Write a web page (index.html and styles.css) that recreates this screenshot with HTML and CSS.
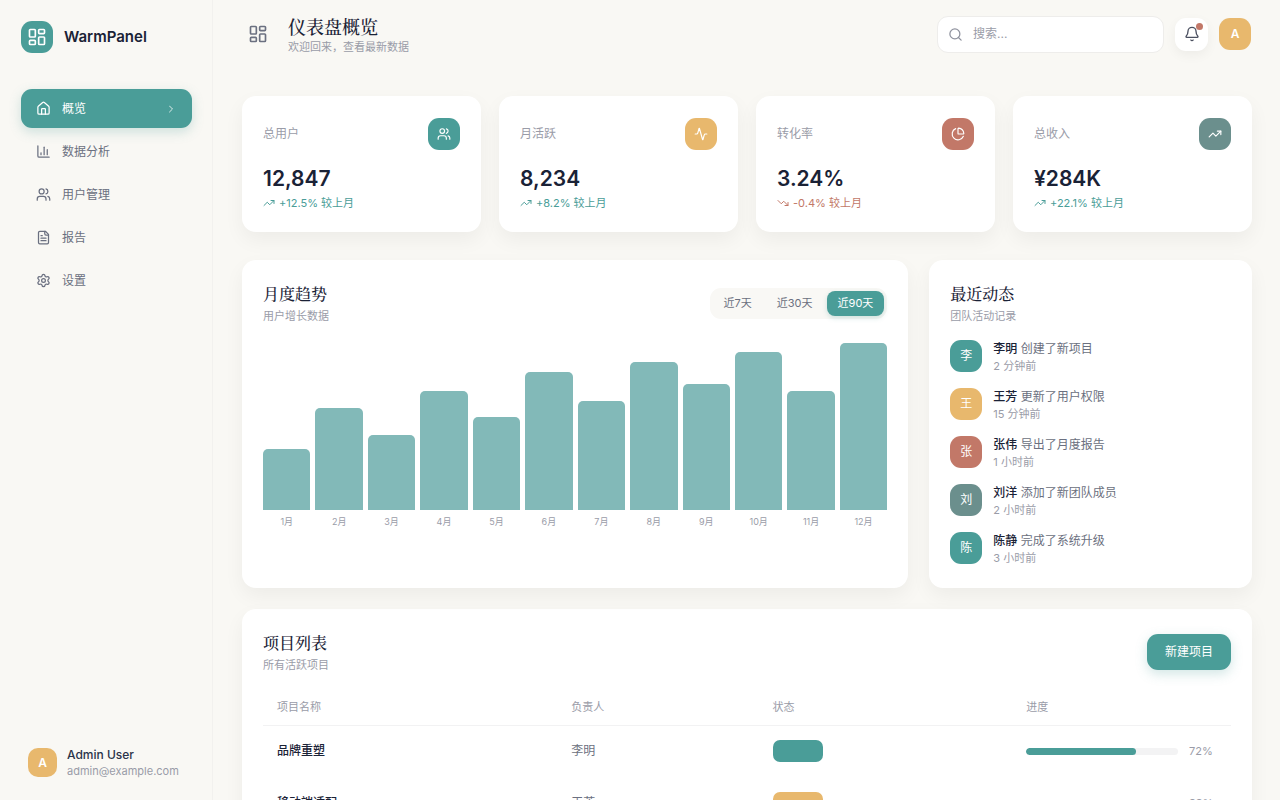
FILE: index.html
```html
<!DOCTYPE html>
<html lang="zh-CN">
  <head>
    <meta charset="UTF-8" />
    <meta name="viewport" content="width=device-width, initial-scale=1.0" />
    <title>WarmPanel</title>
    <link rel="stylesheet" href="styles.css">
  </head>
  <body>
    <!-- 图标 -->
    <svg class="sprite" aria-hidden="true">
      <symbol id="i-dashboard" viewBox="0 0 24 24"><rect x="3" y="3" width="7" height="9" rx="1" /><rect x="14" y="3" width="7" height="5" rx="1" /><rect x="14" y="12" width="7" height="9" rx="1" /><rect x="3" y="16" width="7" height="5" rx="1" /></symbol>
      <symbol id="i-home" viewBox="0 0 24 24"><path d="M15 21v-8a1 1 0 0 0-1-1h-4a1 1 0 0 0-1 1v8" /><path d="M3 10a2 2 0 0 1 .7-1.5l7-6a2 2 0 0 1 2.6 0l7 6A2 2 0 0 1 21 10v9a2 2 0 0 1-2 2H5a2 2 0 0 1-2-2z" /></symbol>
      <symbol id="i-chart" viewBox="0 0 24 24"><path d="M3 3v16a2 2 0 0 0 2 2h16" /><path d="M18 17V9" /><path d="M13 17V5" /><path d="M8 17v-3" /></symbol>
      <symbol id="i-users" viewBox="0 0 24 24"><path d="M16 21v-2a4 4 0 0 0-4-4H6a4 4 0 0 0-4 4v2" /><circle cx="9" cy="7" r="4" /><path d="M22 21v-2a4 4 0 0 0-3-3.87" /><path d="M16 3.13a4 4 0 0 1 0 7.75" /></symbol>
      <symbol id="i-file" viewBox="0 0 24 24"><path d="M15 2H6a2 2 0 0 0-2 2v16a2 2 0 0 0 2 2h12a2 2 0 0 0 2-2V7z" /><path d="M14 2v4a2 2 0 0 0 2 2h4" /><path d="M10 9H8" /><path d="M16 13H8" /><path d="M16 17H8" /></symbol>
      <symbol id="i-settings" viewBox="0 0 24 24"><path d="M9.67 4.14a2.34 2.34 0 0 1 4.66 0 2.34 2.34 0 0 0 3.32 1.91 2.34 2.34 0 0 1 2.33 4.04 2.34 2.34 0 0 0 0 3.83 2.34 2.34 0 0 1-2.33 4.03 2.34 2.34 0 0 0-3.32 1.92 2.34 2.34 0 0 1-4.66 0 2.34 2.34 0 0 0-3.32-1.92 2.34 2.34 0 0 1-2.33-4.03 2.34 2.34 0 0 0 0-3.83 2.34 2.34 0 0 1 2.33-4.04 2.34 2.34 0 0 0 3.32-1.91" /><circle cx="12" cy="12" r="3" /></symbol>
      <symbol id="i-right" viewBox="0 0 24 24"><path d="m9 18 6-6-6-6" /></symbol>
      <symbol id="i-search" viewBox="0 0 24 24"><circle cx="11" cy="11" r="8" /><path d="m21 21-4.3-4.3" /></symbol>
      <symbol id="i-bell" viewBox="0 0 24 24"><path d="M10.3 21a1.94 1.94 0 0 0 3.4 0" /><path d="M3.26 15.33A1 1 0 0 0 4 17h16a1 1 0 0 0 .74-1.67C19.41 13.96 18 12.5 18 8A6 6 0 0 0 6 8c0 4.5-1.41 5.96-2.74 7.33" /></symbol>
      <symbol id="i-activity" viewBox="0 0 24 24"><path d="M22 12h-2.5a2 2 0 0 0-1.9 1.5l-2.4 8.3a.25.25 0 0 1-.4 0L9.2 2.2a.25.25 0 0 0-.4 0l-2.4 8.3A2 2 0 0 1 4.5 12H2" /></symbol>
      <symbol id="i-pie" viewBox="0 0 24 24"><path d="M21 12c.55 0 1-.45.95-1a10 10 0 0 0-8.95-8.95c-.55-.05-1 .4-1 .95v8a1 1 0 0 0 1 1z" /><path d="M21.21 15.89A10 10 0 1 1 8 2.83" /></symbol>
      <symbol id="i-up" viewBox="0 0 24 24"><path d="M16 7h6v6" /><path d="m22 7-8.5 8.5-5-5L2 17" /></symbol>
      <symbol id="i-down" viewBox="0 0 24 24"><path d="M16 17h6v-6" /><path d="m22 17-8.5-8.5-5 5L2 7" /></symbol>
    </svg>

    <div class="app">
      <aside class="sidebar">
        <div class="brand">
          <span class="brand-icon teal"><svg class="icon icon-lg"><use href="#i-dashboard" /></svg></span>
          <span class="brand-name">WarmPanel</span>
        </div>
        <nav class="nav">
          <a class="nav-item active" href="#"><svg class="icon"><use href="#i-home" /></svg><span>概览</span><svg class="icon chevron"><use href="#i-right" /></svg></a>
          <a class="nav-item" href="#"><svg class="icon"><use href="#i-chart" /></svg><span>数据分析</span></a>
          <a class="nav-item" href="#"><svg class="icon"><use href="#i-users" /></svg><span>用户管理</span></a>
          <a class="nav-item" href="#"><svg class="icon"><use href="#i-file" /></svg><span>报告</span></a>
          <a class="nav-item" href="#"><svg class="icon"><use href="#i-settings" /></svg><span>设置</span></a>
        </nav>
        <div class="user">
          <span class="user-avatar amber">A</span>
          <div>
            <div class="user-name">Admin User</div>
            <div class="user-mail">admin@example.com</div>
          </div>
        </div>
      </aside>

      <div class="main">
        <header class="topbar">
          <button class="menu-btn" type="button" aria-label="切换侧栏"><svg class="icon icon-lg"><use href="#i-dashboard" /></svg></button>
          <div class="page-title">
            <h1>仪表盘概览</h1>
            <p>欢迎回来，查看最新数据</p>
          </div>
          <label class="search">
            <svg class="icon"><use href="#i-search" /></svg>
            <input type="text" placeholder="搜索..." aria-label="搜索" />
          </label>
          <button class="bell" type="button" aria-label="通知"><svg class="icon icon-lg"><use href="#i-bell" /></svg><span class="dot"></span></button>
          <button class="tile amber bold" type="button">A</button>
        </header>

        <main class="content">
          <section class="stats">
            <div class="card stat">
              <div class="stat-top"><span>总用户</span><span class="tile teal"><svg class="icon"><use href="#i-users" /></svg></span></div>
              <div class="stat-value">12,847</div>
              <div class="trend"><svg class="icon"><use href="#i-up" /></svg>+12.5% 较上月</div>
            </div>
            <div class="card stat">
              <div class="stat-top"><span>月活跃</span><span class="tile amber"><svg class="icon"><use href="#i-activity" /></svg></span></div>
              <div class="stat-value">8,234</div>
              <div class="trend"><svg class="icon"><use href="#i-up" /></svg>+8.2% 较上月</div>
            </div>
            <div class="card stat">
              <div class="stat-top"><span>转化率</span><span class="tile red"><svg class="icon"><use href="#i-pie" /></svg></span></div>
              <div class="stat-value">3.24%</div>
              <div class="trend down"><svg class="icon"><use href="#i-down" /></svg>-0.4% 较上月</div>
            </div>
            <div class="card stat">
              <div class="stat-top"><span>总收入</span><span class="tile slate"><svg class="icon"><use href="#i-up" /></svg></span></div>
              <div class="stat-value">¥284K</div>
              <div class="trend"><svg class="icon"><use href="#i-up" /></svg>+22.1% 较上月</div>
            </div>
          </section>

          <section class="panels">
            <div class="card chart-card">
              <div class="card-head">
                <div>
                  <h2>月度趋势</h2>
                  <p>用户增长数据</p>
                </div>
                <div class="range">
                  <button type="button">近7天</button>
                  <button type="button">近30天</button>
                  <button type="button" class="active">近90天</button>
                </div>
              </div>
              <div class="chart">
                <div class="col"><div class="track"><div class="bar" style="height: 36%"></div></div><span>1月</span></div>
                <div class="col"><div class="track"><div class="bar" style="height: 60%"></div></div><span>2月</span></div>
                <div class="col"><div class="track"><div class="bar" style="height: 44%"></div></div><span>3月</span></div>
                <div class="col"><div class="track"><div class="bar" style="height: 70%"></div></div><span>4月</span></div>
                <div class="col"><div class="track"><div class="bar" style="height: 55%"></div></div><span>5月</span></div>
                <div class="col"><div class="track"><div class="bar" style="height: 81%"></div></div><span>6月</span></div>
                <div class="col"><div class="track"><div class="bar" style="height: 64%"></div></div><span>7月</span></div>
                <div class="col"><div class="track"><div class="bar" style="height: 87%"></div></div><span>8月</span></div>
                <div class="col"><div class="track"><div class="bar" style="height: 74%"></div></div><span>9月</span></div>
                <div class="col"><div class="track"><div class="bar" style="height: 93%"></div></div><span>10月</span></div>
                <div class="col"><div class="track"><div class="bar" style="height: 70%"></div></div><span>11月</span></div>
                <div class="col"><div class="track"><div class="bar" style="height: 98%"></div></div><span>12月</span></div>
              </div>
            </div>

            <div class="card">
              <div class="card-head">
                <div>
                  <h2>最近动态</h2>
                  <p>团队活动记录</p>
                </div>
              </div>
              <ul class="feed">
                <li><span class="tile teal">李</span><div><p class="feed-text"><b>李明</b> 创建了新项目</p><p class="feed-time">2 分钟前</p></div></li>
                <li><span class="tile amber">王</span><div><p class="feed-text"><b>王芳</b> 更新了用户权限</p><p class="feed-time">15 分钟前</p></div></li>
                <li><span class="tile red">张</span><div><p class="feed-text"><b>张伟</b> 导出了月度报告</p><p class="feed-time">1 小时前</p></div></li>
                <li><span class="tile slate">刘</span><div><p class="feed-text"><b>刘洋</b> 添加了新团队成员</p><p class="feed-time">2 小时前</p></div></li>
                <li><span class="tile teal">陈</span><div><p class="feed-text"><b>陈静</b> 完成了系统升级</p><p class="feed-time">3 小时前</p></div></li>
              </ul>
            </div>
          </section>

          <section class="card">
            <div class="card-head">
              <div>
                <h2>项目列表</h2>
                <p>所有活跃项目</p>
              </div>
              <button class="primary" type="button">新建项目</button>
            </div>
            <table class="projects">
              <thead>
                <tr>
                  <th class="col-name">项目名称</th>
                  <th class="col-owner">负责人</th>
                  <th class="col-status">状态</th>
                  <th>进度</th>
                </tr>
              </thead>
              <tbody>
                <tr>
                  <td class="name">品牌重塑</td>
                  <td>李明</td>
                  <td><span class="badge teal"></span></td>
                  <td><div class="progress"><div class="rail"><div class="fill teal" style="width: 72%"></div></div><span>72%</span></div></td>
                </tr>
                <tr>
                  <td class="name">移动端适配</td>
                  <td>王芳</td>
                  <td><span class="badge amber"></span></td>
                  <td><div class="progress"><div class="rail"><div class="fill amber" style="width: 88%"></div></div><span>88%</span></div></td>
                </tr>
              </tbody>
            </table>
          </section>
        </main>
      </div>
    </div>
  </body>
</html>
```
FILE: styles.css
```css
* {
  box-sizing: border-box;
  margin: 0;
  padding: 0;
}
body {
  background: #f9f8f4;
  color: #1a2236;
  font-family: Inter, "Noto Sans CJK SC", sans-serif;
  font-size: 12px;
  line-height: 18px;
}
button,
input {
  font: inherit;
  color: inherit;
  border: none;
  background: none;
}
button {
  cursor: pointer;
}
a {
  color: inherit;
  text-decoration: none;
}
ul {
  list-style: none;
}
.sprite {
  display: none;
}
.icon {
  width: 15px;
  height: 15px;
  flex-shrink: 0;
  fill: none;
  stroke: currentColor;
  stroke-width: 2;
  stroke-linecap: round;
  stroke-linejoin: round;
}
.icon-lg {
  width: 20px;
  height: 20px;
}
.teal {
  background: #4a9d98;
}
.amber {
  background: #e8b86d;
}
.red {
  background: #c27868;
}
.slate {
  background: #6b8f8d;
}

/* 布局 */
.app {
  display: flex;
  height: 100vh;
}
.main {
  flex: 1;
  min-width: 0;
  overflow-y: auto;
  scrollbar-width: none;
}
.content {
  padding: 28px 28px 28px 29px;
}

/* 侧栏 */
.sidebar {
  display: flex;
  flex-direction: column;
  width: 213px;
  padding: 21px 20px 21px 21px;
  border-right: 1px solid #f2f1ee;
}
.brand {
  display: flex;
  align-items: center;
  gap: 11px;
  margin-bottom: 36px;
}
.brand-icon {
  display: flex;
  align-items: center;
  justify-content: center;
  width: 32px;
  height: 32px;
  border-radius: 11px;
  color: #fff;
}
.brand-name {
  font-size: 15px;
  font-weight: 600;
}
.nav {
  display: flex;
  flex-direction: column;
  gap: 4px;
  flex: 1;
}
.nav-item {
  display: flex;
  align-items: center;
  gap: 11px;
  height: 39px;
  padding: 0 15px;
  border-radius: 11px;
  color: #6b7080;
}
.nav-item.active {
  background: #4a9d98;
  color: #fff;
  box-shadow: 0 4px 12px rgba(74, 157, 152, 0.25);
}
.chevron {
  width: 12px;
  height: 12px;
  margin-left: auto;
  opacity: 0.8;
}
.user {
  display: flex;
  align-items: center;
  gap: 10px;
  padding: 0 7px;
}
.user-avatar {
  display: flex;
  align-items: center;
  justify-content: center;
  width: 29px;
  height: 29px;
  border-radius: 10px;
  color: #fff;
  font-weight: 600;
}
.user-name {
  color: #2a3349;
  font-weight: 500;
  line-height: 17px;
}
.user-mail {
  color: #9a9ca8;
  font-size: 11px;
  line-height: 16px;
}

/* 顶栏 */
.topbar {
  display: flex;
  align-items: center;
  gap: 11px;
  height: 68px;
  padding: 0 29px 0 28px;
}
.menu-btn {
  display: flex;
  align-items: center;
  justify-content: center;
  width: 33px;
  height: 33px;
  color: #6b7080;
}
.page-title {
  flex: 1;
  padding: 3px 0 0 3px;
}
h1,
h2 {
  font-family: "Noto Serif", "Noto Serif CJK SC", "Noto Sans CJK SC", serif;
  font-weight: 500;
}
h1 {
  font-size: 18px;
  line-height: 23px;
}
.page-title p,
.card-head p {
  color: #9a9ca8;
  font-size: 11px;
  line-height: 17px;
}
.search {
  display: flex;
  align-items: center;
  gap: 10px;
  width: 227px;
  height: 37px;
  padding: 0 10px;
  background: #fff;
  border: 1px solid #eeedeb;
  border-radius: 11px;
  color: #8f929e;
}
.search input {
  width: 100%;
  outline: none;
}
.search input::placeholder {
  color: #9a9ca8;
}
.bell {
  display: flex;
  align-items: center;
  justify-content: center;
  position: relative;
  width: 33px;
  height: 33px;
  background: #fff;
  border-radius: 11px;
  color: #4b5060;
  box-shadow: 0 4px 12px rgba(0, 0, 0, 0.05);
}
.bell .icon {
  width: 16px;
  height: 16px;
}
.dot {
  position: absolute;
  top: 5px;
  right: 5px;
  width: 7px;
  height: 7px;
  border-radius: 50%;
  background: #c27868;
}
.tile {
  display: flex;
  align-items: center;
  justify-content: center;
  flex-shrink: 0;
  width: 32px;
  height: 32px;
  border-radius: 11px;
  color: #fff;
}
.tile .icon {
  width: 14px;
  height: 14px;
}
.bold {
  font-weight: 600;
}

/* 卡片 */
.card {
  padding: 21px;
  background: #fff;
  border-radius: 14px;
  box-shadow: 0 8px 20px rgba(0, 0, 0, 0.05);
}
.card-head {
  display: flex;
  align-items: center;
  justify-content: space-between;
  margin-bottom: 15px;
}
h2 {
  font-size: 16px;
  line-height: 27px;
}
.stats {
  display: grid;
  grid-template-columns: repeat(4, 1fr);
  gap: 18px;
  margin-bottom: 28px;
}
.stat {
  padding: 22px 21px 20px;
}
.stat-top {
  display: flex;
  align-items: center;
  justify-content: space-between;
  margin-bottom: 14px;
  color: #9a9ca8;
}
.stat-value {
  font-size: 21px;
  font-weight: 600;
  line-height: 30px;
}
.trend {
  display: flex;
  align-items: center;
  gap: 4px;
  color: #4a9d98;
  font-size: 11px;
}
.trend .icon {
  width: 12px;
  height: 12px;
}
.trend.down {
  color: #c27868;
}
.panels {
  display: grid;
  grid-template-columns: repeat(3, 1fr);
  gap: 21px;
  margin-bottom: 21px;
}
.chart-card {
  grid-column: span 2;
}

/* 时间范围 */
.range {
  display: flex;
  gap: 3px;
  padding: 3px;
  border-radius: 11px;
  background: #f9f8f5;
}
.range button {
  padding: 0 11px;
  border-radius: 8px;
  color: #6b7080;
  font-size: 11px;
  line-height: 25px;
}
.range .active {
  background: #4a9d98;
  color: #fff;
  box-shadow: 0 2px 5px rgba(74, 157, 152, 0.25);
}

/* 柱状图 */
.chart {
  display: flex;
  gap: 5px;
}
.col {
  flex: 1;
  color: #9a9ca8;
  font-size: 9px;
  line-height: 12px;
  text-align: center;
}
.track {
  display: flex;
  align-items: flex-end;
  height: 170px;
  margin-bottom: 6px;
}
.bar {
  width: 100%;
  border-radius: 5px 5px 0 0;
  background: #82b9b8;
}

/* 动态 */
.feed {
  display: flex;
  flex-direction: column;
  gap: 13px;
}
.feed li {
  display: flex;
  gap: 11px;
}
.feed-text {
  color: #6b7080;
}
.feed-text b {
  color: #1a2236;
  font-weight: 500;
}
.feed-time {
  color: #9a9ca8;
  font-size: 11px;
  line-height: 17px;
}

/* 项目表 */
.primary {
  height: 36px;
  padding: 0 18px;
  border-radius: 11px;
  background: #4a9d98;
  color: #fff;
  box-shadow: 0 4px 12px rgba(74, 157, 152, 0.25);
}
.projects {
  width: 100%;
  border-collapse: collapse;
  table-layout: fixed;
}
.projects th {
  height: 36px;
  padding: 0 14px;
  border-bottom: 1px solid #f2f2f3;
  color: #9a9ca8;
  font-size: 11px;
  font-weight: 400;
  text-align: left;
}
.projects td {
  height: 52px;
  padding: 0 14px;
  color: #6b7080;
}
.projects .name {
  color: #1a2236;
  font-weight: 500;
}
.col-name {
  width: 30.4%;
}
.col-owner {
  width: 20.8%;
}
.col-status {
  width: 26.2%;
}
.badge {
  display: block;
  width: 50px;
  height: 22px;
  border-radius: 7px;
}
.progress {
  display: flex;
  align-items: center;
  gap: 11px;
}
.rail {
  flex: 1;
  height: 7px;
  border-radius: 4px;
  background: #f3f3f4;
  overflow: hidden;
}
.fill {
  height: 100%;
  border-radius: 4px;
}
.progress span {
  width: 28px;
  color: #9a9ca8;
  font-size: 11px;
}
```
